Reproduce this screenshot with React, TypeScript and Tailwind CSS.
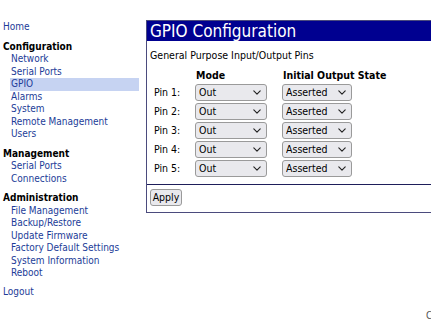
import type { JSX } from "react";

type NavGroup = {
  title: string;
  items: string[];
};

const NAV_GROUPS: NavGroup[] = [
  {
    title: "Configuration",
    items: ["Network", "Serial Ports", "GPIO", "Alarms", "System", "Remote Management", "Users"],
  },
  { title: "Management", items: ["Serial Ports", "Connections"] },
  {
    title: "Administration",
    items: [
      "File Management",
      "Backup/Restore",
      "Update Firmware",
      "Factory Default Settings",
      "System Information",
      "Reboot",
    ],
  },
];

const PINS = [1, 2, 3, 4, 5];

function Chevron(): JSX.Element {
  return (
    <svg viewBox="0 0 10 6" aria-hidden="true" className="pointer-events-none absolute right-[6px] top-[6px] h-[5px] w-[8px]">
      <path d="m1 1 4 4 4-4" fill="none" stroke="#222" strokeWidth="1.4" strokeLinecap="round" strokeLinejoin="round" />
    </svg>
  );
}

function FakeSelect(props: { value: string; width: string }): JSX.Element {
  return (
    <div className={`relative h-[17px] ${props.width}`}>
      <select
        defaultValue={props.value}
        className="h-full w-full appearance-none rounded-[3px] border border-[#9a9a9a] bg-[#e9e9ed] pl-[3px] text-[10.5px] leading-[15px] text-black outline-none"
      >
        <option>{props.value}</option>
      </select>
      <Chevron />
    </div>
  );
}

export default function App(): JSX.Element {
  return (
    <div className="relative h-[320px] w-[431px] overflow-hidden bg-white font-['DejaVu_Sans_Condensed','Liberation_Sans',sans-serif] text-[10px] text-black">
      <div className="flex pt-[20px]">
        <nav className="w-[146px] shrink-0 pt-[1px] leading-[12.5px]">
          <div className="pl-[3px] text-[#1c3c98]">Home</div>
          {NAV_GROUPS.map((group) => (
            <div key={group.title} className="mt-[7px]">
              <div className="pl-[3px] font-bold">{group.title}</div>
              {group.items.map((item) => (
                <div
                  key={item}
                  className={`ml-[10px] mr-[7px] pl-[1px] text-[#1c3c98] ${
                    group.title === "Configuration" && item === "GPIO" ? "bg-[#c6d3f2]" : ""
                  }`}
                >
                  {item}
                </div>
              ))}
            </div>
          ))}
          <div className="mt-[6px] pl-[3px] text-[#1c3c98]">Logout</div>
        </nav>

        <section className="w-[320px] shrink-0 self-start border border-[#4b4b7d]">
          <h1 className="h-[20px] bg-[#000090] pl-[3px] text-[17px] leading-[20px] text-white">GPIO Configuration</h1>
          <div className="px-[3px] text-[10.5px]">
            <p className="mt-[8px] leading-[13px]">General Purpose Input/Output Pins</p>
            <div className="mt-[7px] grid grid-cols-[45px_87px_1fr] items-center">
              <div />
              <div className="h-[14px] pl-[1px] font-bold leading-[13px]">Mode</div>
              <div className="h-[14px] pl-[1px] font-bold leading-[13px]">Initial Output State</div>
              {PINS.map((pin) => (
                <div key={pin} className="contents">
                  <div className="flex h-[19px] items-center pl-[4px]">Pin {pin}:</div>
                  <FakeSelect value="Out" width="w-[72px]" />
                  <FakeSelect value="Asserted" width="w-[70px]" />
                </div>
              ))}
            </div>
          </div>
          <div className="mt-[6px] border-t border-[#1e1e5a]" />
          <div className="px-[3px] pb-[6px] pt-[4px]">
            <button className="h-[17px] w-[32px] rounded-[3px] border border-[#9a9a9a] bg-[#e9e9ed] text-[10.5px] leading-[15px]">
              Apply
            </button>
          </div>
        </section>
      </div>
      <div className="mt-[10px] whitespace-nowrap pl-[426px] text-[10px] text-[#555]">Copyright</div>
    </div>
  );
}
